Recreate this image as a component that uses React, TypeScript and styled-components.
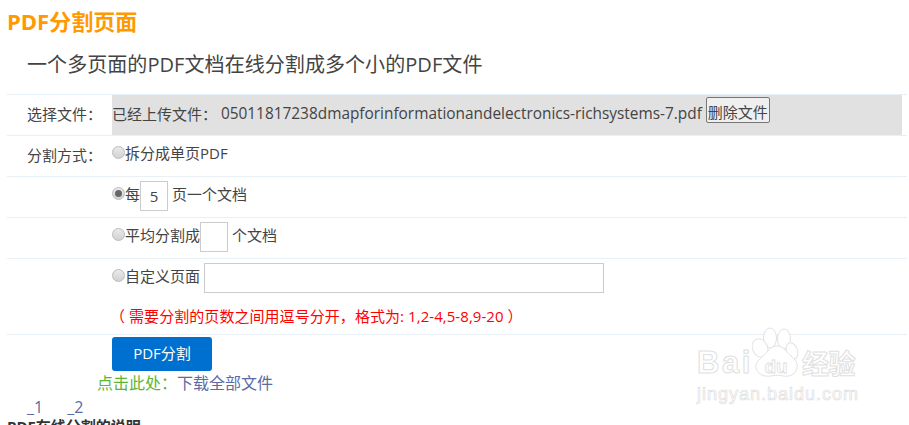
import React from "react";
import styled, { createGlobalStyle } from "styled-components";

const FONT = `"Open Sans", "Noto Sans CJK SC", sans-serif`;

const GlobalStyle = createGlobalStyle`
  html, body {
    margin: 0;
    height: 100%;
    overflow: hidden;
    background: #fff;
  }
  body {
    font-family: ${FONT};
    font-size: 15px;
    color: #444;
  }
`;

const Page = styled.div`
  position: relative;
  height: 425px;
  overflow: hidden;
  padding: 0 2px 0 7px;
  box-sizing: border-box;
`;

const Title = styled.h1`
  margin: 0;
  padding-top: 7px;
  height: 37px;
  box-sizing: border-box;
  font-size: 22px;
  line-height: 29px;
  font-weight: 700;
  color: #ff9900;
`;

const Subtitle = styled.h2`
  margin: 0;
  padding: 13px 0 0 20px;
  height: 57px;
  box-sizing: border-box;
  font-size: 20px;
  line-height: 30px;
  font-weight: 400;
  letter-spacing: 0.07px;
  color: #444;
`;

const Form = styled.div`
  border-top: 1px solid #e8eff5;
`;

const Row = styled.div<{ $h: number }>`
  display: grid;
  grid-template-columns: 105px 1fr;
  height: ${(p) => p.$h}px;
  box-sizing: border-box;
  border-bottom: 1px solid #e8eff5;
`;

const Label = styled.div`
  padding: 9px 0 0 20px;
  line-height: 20px;
  color: #444;
`;

const FileCell = styled.div`
  display: flex;
  align-items: center;
  margin-right: 5px;
  padding-bottom: 4px;
  background: #e1e1e1;
  white-space: pre;
`;

const FileName = styled.span`
  font-size: 15.4px;
`;

const DeleteButton = styled.button`
  margin: -6px 0 0 4px;
  padding: 3px 0 0;
  height: 26px;
  width: 64px;
  box-sizing: border-box;
  border: 1px solid #777;
  border-radius: 2px;
  background: #efefef;
  color: #444;
  font: 15px/20px ${FONT};
  white-space: nowrap;
`;

const Option = styled.label`
  display: flex;
  align-items: center;
  height: 32px;
  white-space: nowrap;
`;

const Radio = styled.span<{ $on?: boolean }>`
  position: relative;
  flex: none;
  width: 13px;
  height: 13px;
  box-sizing: border-box;
  border-radius: 50%;
  border: 1px solid #bbb;
  background: linear-gradient(#eaeaea, #d2d2d2);
  &::after {
    content: "";
    display: ${(p) => (p.$on ? "block" : "none")};
    position: absolute;
    inset: 2px;
    border-radius: 50%;
    background: #666;
  }
`;

const SmallInput = styled.input`
  align-self: flex-start;
  width: 28px;
  height: 30px;
  margin: 4px 4px 0 0;
  padding: 0;
  box-sizing: border-box;
  border: 1px solid #ccc;
  text-align: center;
  font: 15px ${FONT};
  color: #444;
  outline: none;
`;

const WideInput = styled.input`
  align-self: flex-start;
  width: 400px;
  height: 30px;
  margin: 4px 0 0 4px;
  padding: 0;
  box-sizing: border-box;
  border: 1px solid #ccc;
  outline: none;
`;

const CustomCell = styled.div`
  display: flex;
  flex-direction: column;
`;

const Hint = styled.div`
  margin-left: -2px;
  padding-top: 15px;
  line-height: 20px;
  letter-spacing: 0.06px;
  color: #ff0000;
  white-space: nowrap;
`;

const SubmitRow = styled.div`
  padding: 2px 0 0 105px;
`;

const SubmitButton = styled.button`
  display: block;
  width: 100px;
  height: 34px;
  padding: 0 0 3px;
  border: none;
  border-radius: 3px;
  background: #0070d0;
  color: #fff;
  font: 15px ${FONT};
`;

const DownloadLine = styled.div`
  padding-left: 90px;
  line-height: 24px;
  font-size: 16px;
  color: #5cb531;
`;

const FileLink = styled.a`
  color: #5c6aa6;
  text-decoration: none;
`;

const PartLinks = styled.div`
  display: flex;
  gap: 24px;
  padding-left: 20px;
  line-height: 24px;
  font-size: 16px;
`;

const Footer = styled.div`
  margin-top: -3px;
  font-size: 15px;
  line-height: 20px;
  font-weight: 700;
  color: #333;
`;

const Watermark = styled.div`
  position: absolute;
  left: 697px;
  top: 327px;
  width: 170px;
  height: 78px;
  pointer-events: none;
`;

const WatermarkBrand = styled.span`
  position: absolute;
  left: 0;
  top: 19px;
  font: 700 31px/34px "Liberation Sans", sans-serif;
  letter-spacing: 2.5px;
  color: #fff;
  -webkit-text-stroke: 1px #e0e0e0;
`;

const WatermarkCn = styled.span`
  position: absolute;
  left: 105px;
  top: 19px;
  font: 700 27px/34px "Noto Sans CJK SC", sans-serif;
  letter-spacing: -0.5px;
  color: #fff;
  -webkit-text-stroke: 1px #e0e0e0;
`;

const WatermarkUrl = styled.span`
  position: absolute;
  left: 0;
  top: 56px;
  font: 400 18px/22px "Liberation Sans", sans-serif;
  letter-spacing: 1px;
  color: #fff;
  -webkit-text-stroke: 0.7px #dedede;
  white-space: nowrap;
`;

const Paw = styled.svg`
  position: absolute;
  left: 55px;
  top: 0;
`;

function PawMark() {
  return (
    <Paw width="50" height="52" viewBox="0 0 50 52" fill="#fff" stroke="#e2e2e2" strokeWidth="1">
      <ellipse cx="18" cy="11" rx="6.5" ry="10" />
      <ellipse cx="32" cy="12" rx="6.5" ry="10" />
      <ellipse cx="8" cy="21" rx="7.5" ry="9.5" transform="rotate(-25 8 21)" />
      <ellipse cx="40" cy="24" rx="5.5" ry="8.5" transform="rotate(-20 40 24)" />
      <path d="M25 19c7 0 9 6 14 10 5 4 7 8 6 12-2 7-8 9-14 8-4-1-8-1-12 0-6 1-13-1-15-8-1-4 2-8 7-12 5-4 7-10 14-10z" />
      <text x="24" y="46" textAnchor="middle" fontFamily="Liberation Sans, sans-serif" fontSize="19" fontWeight="700" fill="#fff" stroke="#dedede" strokeWidth="0.8">
        du
      </text>
    </Paw>
  );
}

export default function App() {
  return (
    <Page>
      <GlobalStyle />
      <Title>PDF分割页面</Title>
      <Subtitle>一个多页面的PDF文档在线分割成多个小的PDF文件</Subtitle>
      <Form>
        <Row $h={41}>
          <Label>选择文件：</Label>
          <FileCell>
            已经上传文件：{" "}
            <FileName>05011817238dmapforinformationandelectronics-richsystems-7.pdf</FileName>
            <DeleteButton>删除文件</DeleteButton>
          </FileCell>
        </Row>
        <Row $h={41}>
          <Label>分割方式：</Label>
          <Option>
            <Radio />
            拆分成单页PDF
          </Option>
        </Row>
        <Row $h={41}>
          <div />
          <Option>
            <Radio $on />每
            <SmallInput defaultValue="5" />
            页一个文档
          </Option>
        </Row>
        <Row $h={41}>
          <div />
          <Option>
            <Radio />
            平均分割成
            <SmallInput />
            个文档
          </Option>
        </Row>
        <Row $h={76}>
          <div />
          <CustomCell>
            <Option>
              <Radio />
              自定义页面
              <WideInput />
            </Option>
            <Hint>（ 需要分割的页数之间用逗号分开，格式为: 1,2-4,5-8,9-20 ）</Hint>
          </CustomCell>
        </Row>
      </Form>
      <SubmitRow>
        <SubmitButton>PDF分割</SubmitButton>
      </SubmitRow>
      <DownloadLine>
        点击此处：<FileLink href="#">下载全部文件</FileLink>
      </DownloadLine>
      <PartLinks>
        <FileLink href="#">_1</FileLink>
        <FileLink href="#">_2</FileLink>
      </PartLinks>
      <Footer>PDF在线分割的说明</Footer>
      <Watermark>
        <PawMark />
        <WatermarkBrand>Bai</WatermarkBrand>
        <WatermarkCn>经验</WatermarkCn>
        <WatermarkUrl>jingyan.baidu.com</WatermarkUrl>
      </Watermark>
    </Page>
  );
}
